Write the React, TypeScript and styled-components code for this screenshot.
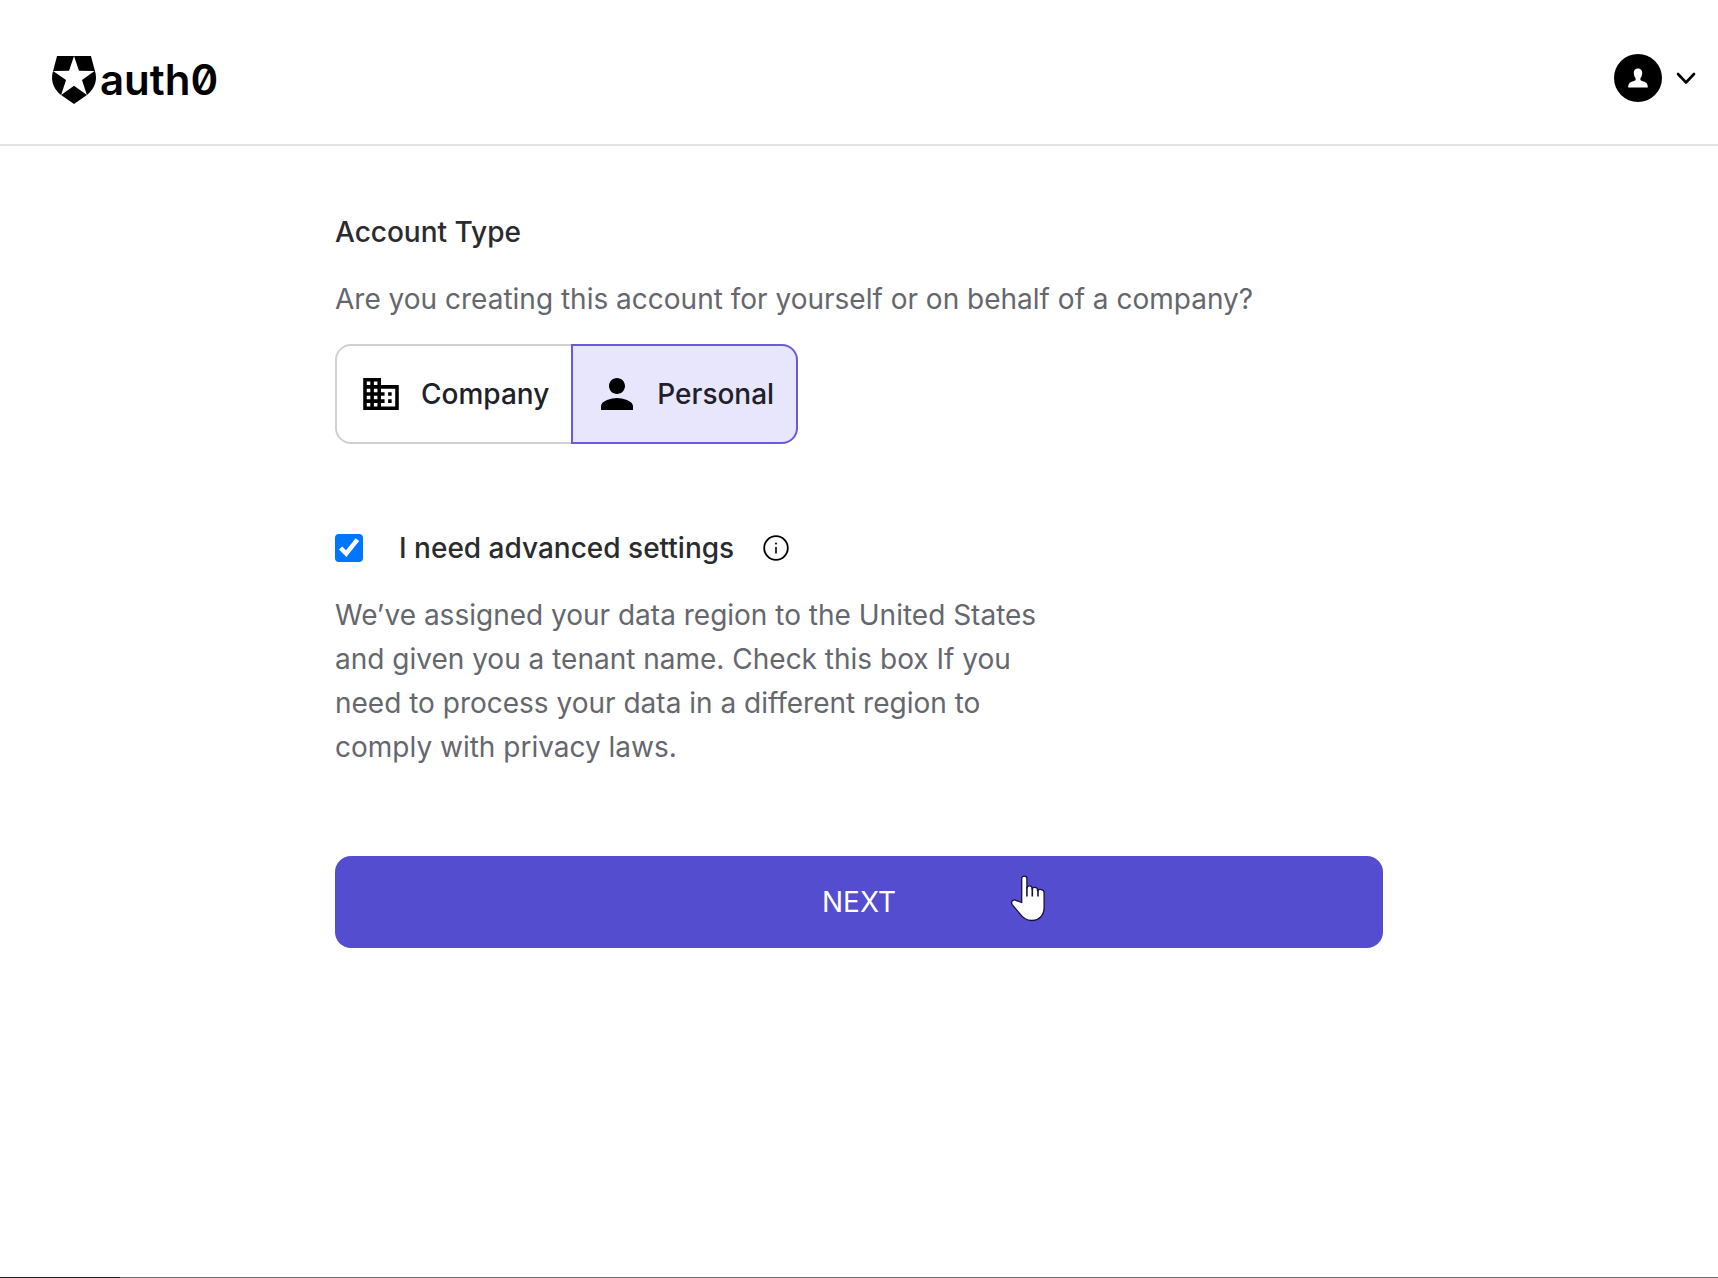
import React, { useState } from "react";
import styled, { createGlobalStyle } from "styled-components";

const GlobalStyle = createGlobalStyle`
  *, *::before, *::after { box-sizing: border-box; }
  body {
    margin: 0;
    background: #fff;
    color: #2a2b2e;
    font-family: Inter, "Liberation Sans", sans-serif;
    font-size: 28px;
    line-height: 44px;
  }
`;

const Page = styled.div`
  min-height: 100vh;
  display: flex;
  flex-direction: column;
`;

const Header = styled.header`
  display: flex;
  justify-content: space-between;
  align-items: flex-start;
  padding: 54px 22px 38px 52px;
  border-bottom: 2px solid #e3e3e3;
`;

const Brand = styled.a`
  display: flex;
  align-items: center;
  gap: 4px;
  color: #000;
  text-decoration: none;
`;

const Wordmark = styled.span`
  font-size: 42px;
  line-height: 52px;
  font-weight: 600;
  font-feature-settings: "zero" 1;
`;

const AccountButton = styled.button`
  display: flex;
  align-items: center;
  gap: 14px;
  padding: 0;
  border: 0;
  background: none;
  color: #000;
  cursor: pointer;
`;

const Content = styled.main`
  width: 100%;
  max-width: 1048px;
  margin: 0 auto;
  padding: 64px 0;
`;

const Form = styled.form`
  display: flex;
  flex-direction: column;
`;

const Group = styled.fieldset`
  margin: 0;
  padding: 0;
  border: 0;
`;

const GroupTitle = styled.legend`
  padding: 0;
  font-weight: 500;
`;

const Text = styled.p<{ $narrow?: boolean }>`
  margin: 23px 0;
  max-width: ${(p) => (p.$narrow ? "740px" : "none")};
  color: #65676e;
`;

const Segments = styled.div`
  display: flex;
`;

const Segment = styled.label<{ $selected: boolean }>`
  position: relative;
  display: flex;
  align-items: center;
  gap: 16px;
  height: 100px;
  padding: 0 22px 0 20px;
  border: 2px solid ${(p) => (p.$selected ? "#6a5bdc" : "#cfd0d2")};
  background: ${(p) => (p.$selected ? "#e8e6fd" : "#fff")};
  color: #1e212a;
  font-weight: 500;
  cursor: pointer;
  z-index: ${(p) => (p.$selected ? 1 : 0)};

  &:first-child { border-radius: 16px 0 0 16px; }
  &:last-child { border-radius: 0 16px 16px 0; }
  & + & { margin-left: -2px; }
`;

const SegmentInput = styled.input`
  position: absolute;
  inset: 0;
  width: 100%;
  height: 100%;
  margin: 0;
  opacity: 0;
  cursor: pointer;
`;

const CheckRow = styled.div`
  display: flex;
  align-items: center;
  margin-top: 82px;
`;

const Checkbox = styled.input`
  width: 28px;
  height: 28px;
  margin: 0 36px 0 0;
  clip-path: inset(0 round 4px);
`;

const CheckLabel = styled.label`
  font-weight: 500;
`;

const InfoButton = styled.button`
  display: flex;
  margin-left: 28px;
  padding: 0;
  border: 0;
  background: none;
  color: #000;
`;

const NextArea = styled.div`
  position: relative;
  margin-top: 64px;
`;

const NextButton = styled.button`
  width: 100%;
  height: 92px;
  border: 0;
  border-radius: 16px;
  background: #554dcf;
  color: #fff;
  font: inherit;
  cursor: pointer;
`;

const Pointer = styled.svg`
  position: absolute;
  top: 18px;
  left: calc(50% + 151px);
  pointer-events: none;
`;

const BottomEdge = styled.footer`
  height: 1px;
  margin-top: auto;
  background: linear-gradient(to right, #1c1c1c 120px, #6b6b6b 120px);
`;

const ShieldLogo = () => (
  <svg width="44" height="48" viewBox="1.5 0 21 24" preserveAspectRatio="none" fill="currentColor" aria-hidden="true">
    <path d="M21.98 7.448L20.100 0H3.900L2.020 7.448c-1.352 4.312.03 9.206 3.815 12.015L12.007 24l6.157-4.552c3.755-2.810 5.182-7.688 3.815-12.015l-6.160 4.580 2.343 7.450-6.157-4.597-6.158 4.580 2.358-7.433-6.188-4.550 7.630-.045L12.008 0l2.356 7.404 7.615.044z" />
  </svg>
);

const Avatar = () => (
  <svg width="48" height="48" viewBox="0 0 48 48" aria-hidden="true">
    <circle cx="24" cy="24" r="24" />
    <path
      fill="#fff"
      d="M24 14.500c-2.800 0-4.200 1.800-4.200 4.300 0 2.200.5 4.200 1.800 5.400v1.600c-.1.800-1 1-2.400 1.400-3 .9-5 1.900-5 6.300h19.600c0-4.400-2-5.400-5-6.300-1.400-.4-2.300-.6-2.400-1.400v-1.600c1.300-1.200 1.800-3.200 1.800-5.400 0-2.500-1.400-4.300-4.200-4.300z"
    />
  </svg>
);

const Chevron = () => (
  <svg width="20" height="14" viewBox="0 0 20 14" fill="none" stroke="currentColor" strokeWidth="2.6" strokeLinecap="round" strokeLinejoin="round" aria-hidden="true">
    <path d="M2 3l8 8.500L18 3" />
  </svg>
);

const CompanyIcon = () => (
  <svg width="48" height="48" viewBox="-1.5 -1.5 27 27" fill="#000" aria-hidden="true">
    <path d="M12 7V3H2v18h20V7H12zM6 19H4v-2h2v2zm0-4H4v-2h2v2zm0-4H4V9h2v2zm0-4H4V5h2v2zm4 12H8v-2h2v2zm0-4H8v-2h2v2zm0-4H8V9h2v2zm0-4H8V5h2v2zm10 12h-8v-2h2v-2h-2v-2h2v-2h-2V9h8v10zm-2-8h-2v2h2v-2zm0 4h-2v2h2v-2z" />
  </svg>
);

const PersonIcon = () => (
  <svg width="48" height="48" viewBox="0 0 24 24" fill="#000" aria-hidden="true">
    <path d="M12 12c2.210 0 4-1.790 4-4s-1.790-4-4-4-4 1.790-4 4 1.790 4 4 4zm0 2c-2.670 0-8 1.340-8 4v2h16v-2c0-2.660-5.330-4-8-4z" />
  </svg>
);

const InfoIcon = () => (
  <svg width="28" height="28" viewBox="0 0 28 28" fill="none" stroke="currentColor" aria-hidden="true">
    <circle cx="14" cy="14" r="11.800" strokeWidth="1.800" />
    <path d="M14 13v6.500" strokeWidth="1.600" />
    <circle cx="14" cy="9.500" r="1" fill="currentColor" stroke="none" />
  </svg>
);

const HandPointer = () => (
  <Pointer width="36" height="48" viewBox="0 0 36 48" aria-hidden="true">
    <path
      fill="#fff"
      stroke="#15133a"
      strokeWidth="1.300"
      strokeLinejoin="round"
      d="M11.700 28.500V4.500c0-3.300 5.200-3.300 5.200 0v9.500c.6-3.200 5.200-2.600 5.200.300v.7c.8-2.600 5.400-2.100 5.400.800v1c1.200-2.200 6.600-1.600 6.600 1.700v15c0 7.400-4.600 13-12.300 13-5.600 0-8.600-1.800-11.600-6.300L2.200 30.600c-2-3.200 1.300-6 4.300-3.900z"
    />
    <path d="M16.900 13v9.500M22.300 14v8.500M28 15.500v7" stroke="#15133a" strokeWidth="1.600" fill="none" />
  </Pointer>
);

const accountTypes = [
  { id: "company", label: "Company", Icon: CompanyIcon },
  { id: "personal", label: "Personal", Icon: PersonIcon },
];

export default function App() {
  const [accountType, setAccountType] = useState("personal");
  const [advanced, setAdvanced] = useState(true);

  return (
    <Page>
      <GlobalStyle />
      <Header>
        <Brand href="#">
          <ShieldLogo />
          <Wordmark>auth0</Wordmark>
        </Brand>
        <AccountButton type="button" aria-label="Account menu">
          <Avatar />
          <Chevron />
        </AccountButton>
      </Header>
      <Content>
        <Form onSubmit={(e) => e.preventDefault()}>
          <Group>
            <GroupTitle>Account Type</GroupTitle>
            <Text>Are you creating this account for yourself or on behalf of a company?</Text>
            <Segments>
              {accountTypes.map(({ id, label, Icon }) => (
                <Segment key={id} $selected={accountType === id}>
                  <SegmentInput
                    type="radio"
                    name="account-type"
                    value={id}
                    checked={accountType === id}
                    onChange={() => setAccountType(id)}
                  />
                  <Icon />
                  {label}
                </Segment>
              ))}
            </Segments>
          </Group>
          <CheckRow>
            <Checkbox
              id="advanced"
              type="checkbox"
              checked={advanced}
              onChange={(e) => setAdvanced(e.target.checked)}
            />
            <CheckLabel htmlFor="advanced">I need advanced settings</CheckLabel>
            <InfoButton type="button" aria-label="About advanced settings">
              <InfoIcon />
            </InfoButton>
          </CheckRow>
          <Text $narrow>
            We’ve assigned your data region to the United States and given you a tenant name. Check this box If you
            need to process your data in a different region to comply with privacy laws.
          </Text>
          <NextArea>
            <NextButton type="submit">NEXT</NextButton>
            <HandPointer />
          </NextArea>
        </Form>
      </Content>
      <BottomEdge />
    </Page>
  );
}
